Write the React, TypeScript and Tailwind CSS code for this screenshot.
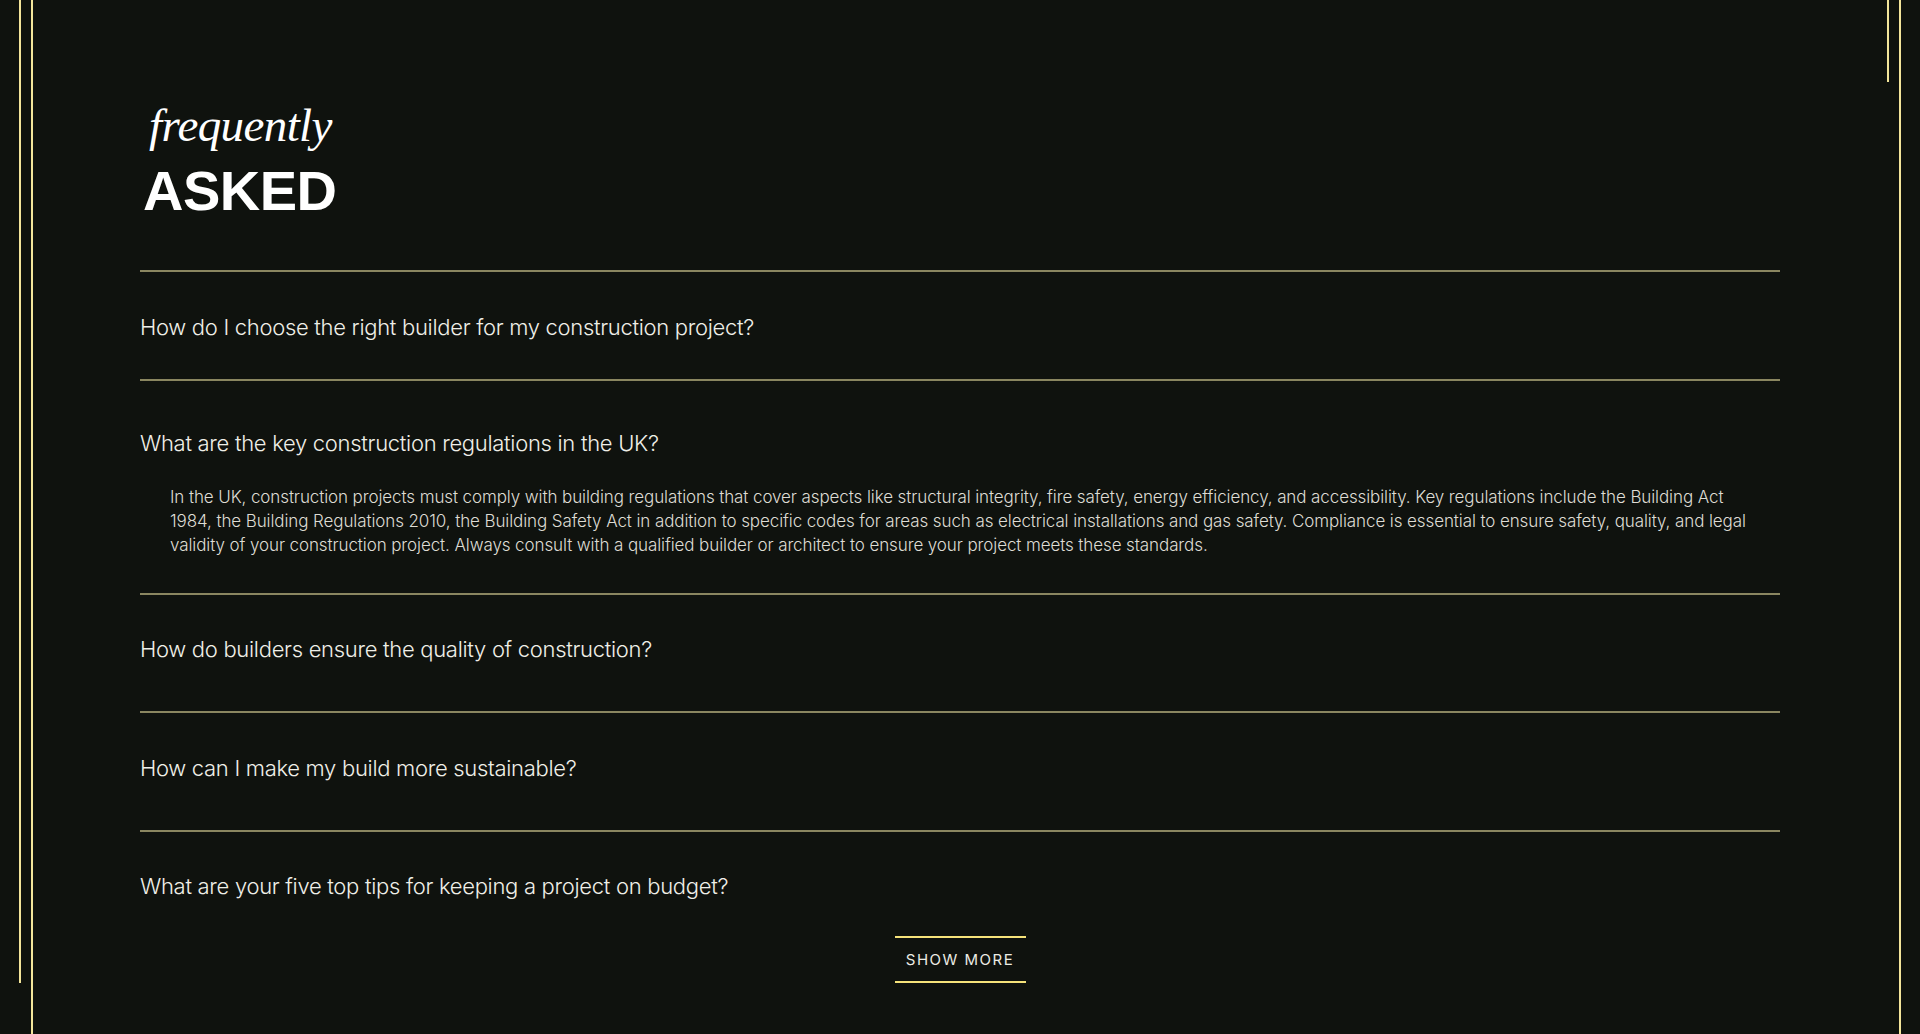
import { useState } from "react";

interface Faq {
  question: string;
  answer?: string;
  rowClass: string;
}

const faqs: Faq[] = [
  {
    question: "How do I choose the right builder for my construction project?",
    rowClass: "pt-[40px] pb-[37px]",
  },
  {
    question: "What are the key construction regulations in the UK?",
    answer:
      "In the UK, construction projects must comply with building regulations that cover aspects like structural integrity, fire safety, energy efficiency, and accessibility. Key regulations include the Building Act 1984, the Building Regulations 2010, the Building Safety Act in addition to specific codes for areas such as electrical installations and gas safety. Compliance is essential to ensure safety, quality, and legal validity of your construction project. Always consult with a qualified builder or architect to ensure your project meets these standards.",
    rowClass: "pt-[47px] pb-[36px]",
  },
  {
    question: "How do builders ensure the quality of construction?",
    rowClass: "pt-[39px] pb-[47px]",
  },
  {
    question: "How can I make my build more sustainable?",
    rowClass: "pt-[40px] pb-[47px]",
  },
  {
    question: "What are your five top tips for keeping a project on budget?",
    rowClass: "pt-[39px] pb-[35px]",
  },
];

export default function App() {
  const [open, setOpen] = useState(1);

  return (
    <div className="relative bg-[#0f120e] pl-[31px] pr-[19px] font-['Inter',sans-serif]">
      {/* short accent lines */}
      <div className="absolute left-[19px] top-0 h-[983px] w-[2px] bg-[#f3e59a]" />
      <div className="absolute left-[1887px] top-0 h-[82px] w-[2px] bg-[#f3e59a]" />

      <div className="min-h-[1034px] border-x-2 border-[#f3e59a] pl-[107px] pr-[119px]">
        {/* Heading */}
        <div className="pt-[102px] pb-[51px]">
          <div className="pl-[9px] font-['Liberation_Serif',serif] text-[47px] italic leading-none tracking-[-0.6px] text-white">
            frequently
          </div>
          <h2 className="mt-[14px] pl-[3px] font-['Liberation_Sans',sans-serif] text-[56px] font-bold leading-none tracking-[-0.5px] text-white">
            ASKED
          </h2>
        </div>

        {/* Questions */}
        <div>
          {faqs.map((faq, i) => (
            <div key={i} className="border-t-2 border-[#8a8660]">
              <button
                onClick={() => setOpen(open === i ? -1 : i)}
                className={`block w-full text-left ${faq.rowClass}`}
              >
                <span className="block text-[22px] font-light leading-[30px] tracking-[-0.3px] text-[#efefe8]">
                  {faq.question}
                </span>
                {open === i && faq.answer && (
                  <span className="mt-[27px] block pl-[30px] pr-[20px] text-[17px] font-light leading-[24px] tracking-[-0.1px] text-[#dedcd4]">
                    {faq.answer}
                  </span>
                )}
              </button>
            </div>
          ))}
        </div>

        <div className="flex justify-center">
          <button className="w-[131px] border-y-2 border-[#f5e27a] py-[10px] text-center text-[15px] leading-[23px] tracking-[1.5px] text-[#ecece4]">
            SHOW MORE
          </button>
        </div>
      </div>
    </div>
  );
}
